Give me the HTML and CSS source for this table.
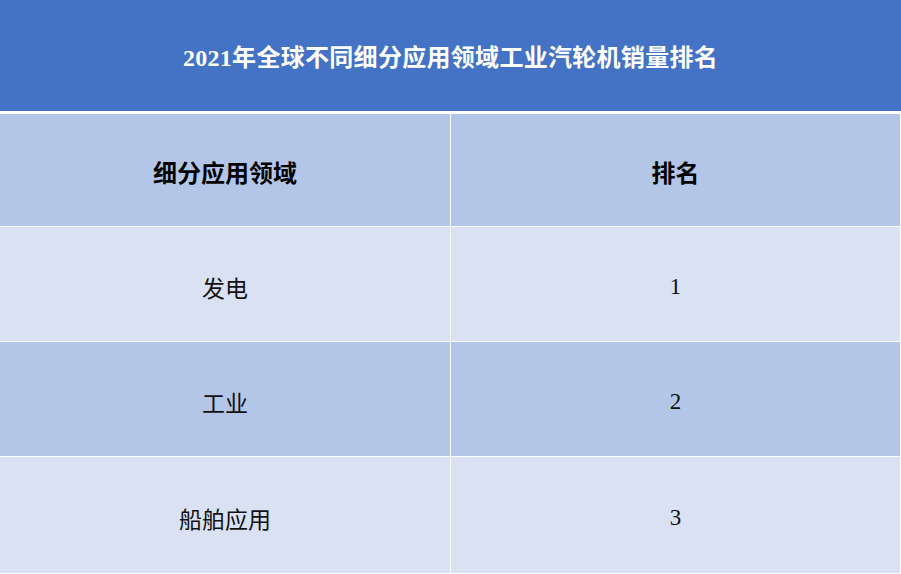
FILE: index.html
```html
<!DOCTYPE html>
<html lang="zh">
<head>
<meta charset="utf-8">
<link rel="stylesheet" href="styles.css">
</head>
<body>
<div class="title">2021年全球不同细分应用领域工业汽轮机销量排名</div>
<div class="table">
  <div class="cell head">细分应用领域</div>
  <div class="cell head">排名</div>
  <div class="cell light">发电</div>
  <div class="cell light">1</div>
  <div class="cell dark">工业</div>
  <div class="cell dark">2</div>
  <div class="cell light">船舶应用</div>
  <div class="cell light">3</div>
</div>
</body>
</html>
```
FILE: styles.css
```css
html, body {
  margin: 0;
  padding: 0;
  background: #ffffff;
}
body {
  width: 901px;
  height: 574px;
  overflow: hidden;
  font-family: "Liberation Serif", "Noto Sans CJK SC", serif;
}
.title {
  height: 111px;
  background: #4472c4;
  color: #ffffff;
  font-weight: bold;
  font-size: 24px;
  letter-spacing: 0.3px;
  display: flex;
  align-items: center;
  justify-content: center;
}
.table {
  margin-top: 3px;
  width: 900px;
  display: grid;
  grid-template-columns: 450px 449px;
  grid-template-rows: 112px 114px 114px 116px;
  gap: 1px;
}
.cell {
  display: flex;
  align-items: center;
  justify-content: center;
  font-size: 23px;
  color: #111111;
  padding-top: 5px;
  box-sizing: border-box;
}
.head {
  background: #b4c6e7;
  font-weight: bold;
  font-size: 24px;
  color: #000000;
  padding-top: 2px;
}
.light {
  background: #d9e1f2;
}
.dark {
  background: #b4c6e7;
}
```
